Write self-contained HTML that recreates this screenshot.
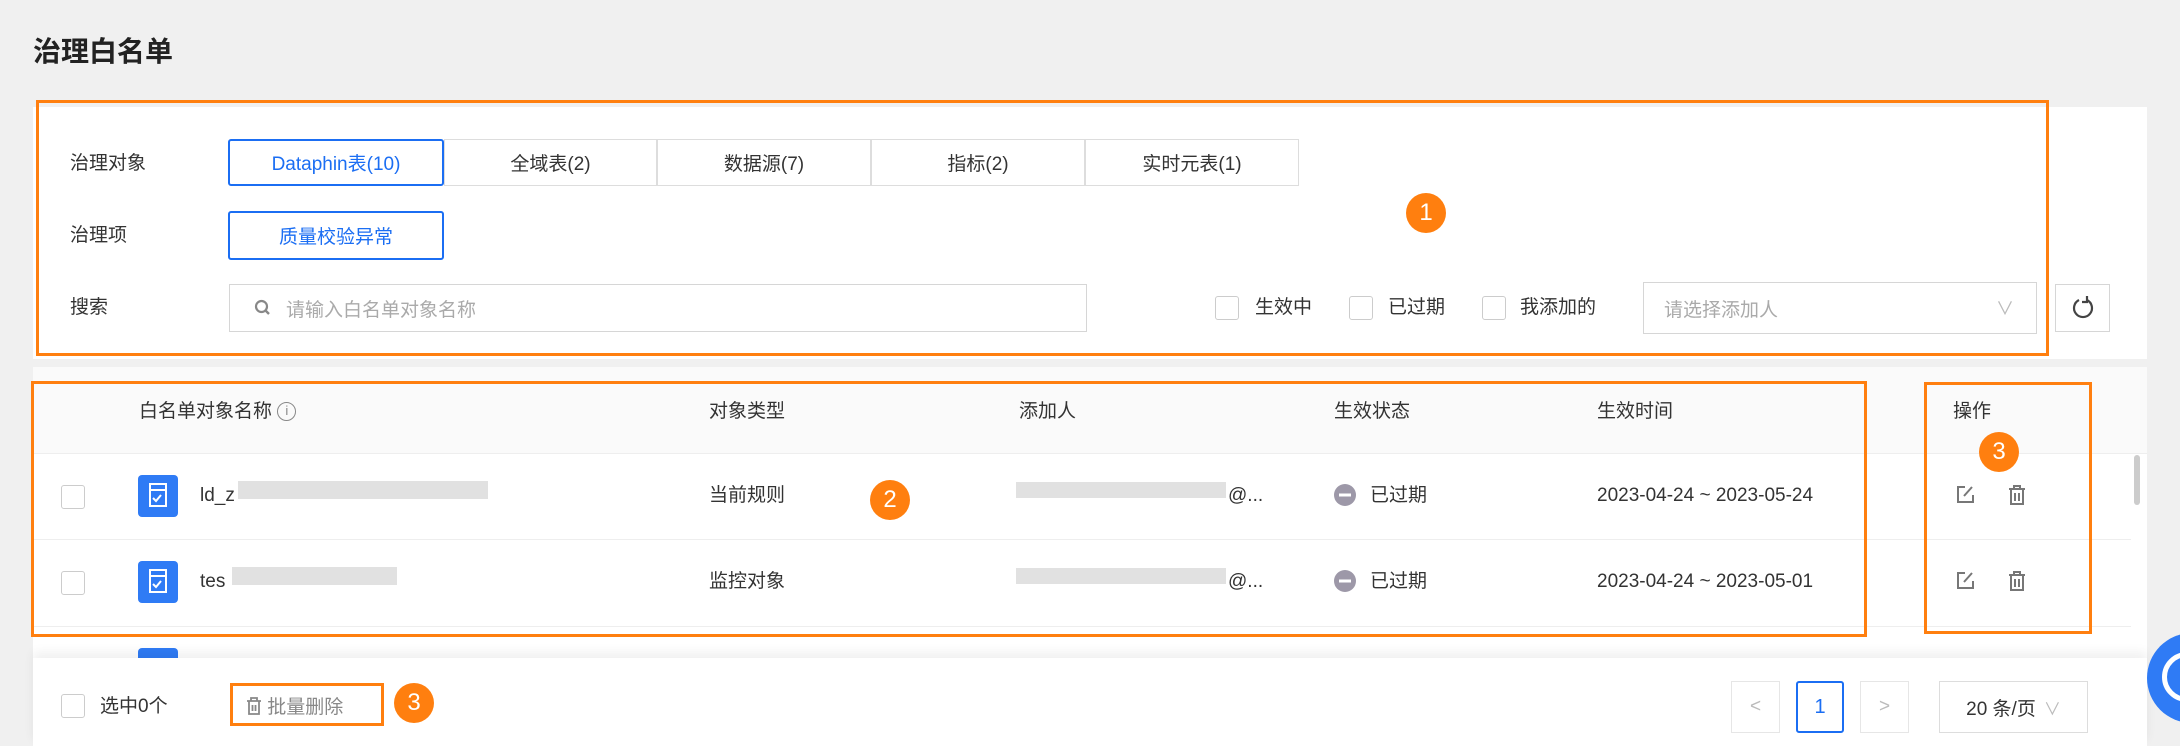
<!DOCTYPE html>
<html><head><meta charset="utf-8"><style>
*{box-sizing:border-box;margin:0;padding:0}
body{width:2180px;height:746px;background:#f0f0f0;position:relative;overflow:hidden;font-family:"Liberation Sans","Noto Sans CJK SC",sans-serif;font-size:19px;color:#333}
.a{position:absolute}
.t{position:absolute;white-space:nowrap;line-height:1}
.btn{position:absolute;border:1px solid #ddd;background:#fff;display:flex;align-items:center;justify-content:center;font-size:19px;color:#333}
.sel{border:2px solid #1b6ef3;color:#1b6ef3;border-radius:3px}
.cb{position:absolute;width:24px;height:24px;border:1px solid #ccc;border-radius:3px;background:#fff}
.ob{position:absolute;border:3px solid #ff7f0f}
.badge{position:absolute;width:40px;height:40px;border-radius:50%;background:#ff7f0f;color:#fff;font-size:24px;display:flex;align-items:center;justify-content:center}
.blur{position:absolute;background:#d4d4d4;opacity:.7}
</style></head><body>
<div class="t" style="left:33px;top:38px;font-size:28px;font-weight:bold;color:#222">治理白名单</div>
<div class="a" style="left:33px;top:107px;width:2114px;height:252px;background:#fff"></div>
<div class="t" style="left:70px;top:154px">治理对象</div>
<div class="btn sel" style="left:228px;top:139px;width:216px;height:47px">Dataphin表(10)</div>
<div class="btn" style="left:444px;top:139px;width:213px;height:47px">全域表(2)</div>
<div class="btn" style="left:657px;top:139px;width:214px;height:47px">数据源(7)</div>
<div class="btn" style="left:871px;top:139px;width:214px;height:47px">指标(2)</div>
<div class="btn" style="left:1085px;top:139px;width:214px;height:47px">实时元表(1)</div>
<div class="t" style="left:70px;top:226px">治理项</div>
<div class="btn sel" style="left:228px;top:211px;width:216px;height:49px">质量校验异常</div>
<div class="t" style="left:70px;top:298px">搜索</div>
<div class="btn" style="left:229px;top:284px;width:858px;height:48px;justify-content:flex-start;padding-left:24px;color:#aaa;border-color:#d6d6d6">
<svg width="18" height="18" viewBox="0 0 18 18" style="margin-right:14px"><circle cx="7.5" cy="7.5" r="5.5" fill="none" stroke="#888" stroke-width="2.2"/><path d="M11.5 11.5L15 15" stroke="#888" stroke-width="2.4"/></svg>请输入白名单对象名称</div>
<div class="cb" style="left:1215px;top:296px"></div><div class="t" style="left:1255px;top:298px">生效中</div>
<div class="cb" style="left:1349px;top:296px"></div><div class="t" style="left:1388px;top:298px">已过期</div>
<div class="cb" style="left:1482px;top:296px"></div><div class="t" style="left:1520px;top:298px">我添加的</div>
<div class="btn" style="left:1643px;top:282px;width:394px;height:52px;justify-content:flex-start;padding-left:20px;color:#aaa;border-color:#d6d6d6">请选择添加人<span style="position:absolute;right:22px;color:#bbb;font-size:18px">∨</span></div>
<div class="btn" style="left:2055px;top:284px;width:55px;height:48px;border-color:#d6d6d6"><svg width="24" height="26" viewBox="0 0 24 26"><path d="M8 5A9 9 0 1 0 16 5" fill="none" stroke="#444" stroke-width="2.2"/><path d="M16 1v6h-5" fill="none" stroke="#444" stroke-width="2.2"/></svg></div>
<div class="ob" style="left:36px;top:100px;width:2013px;height:256px"></div>
<div class="badge" style="left:1406px;top:193px">1</div>

<div class="a" style="left:33px;top:367px;width:2114px;height:291px;background:#fff"></div>
<div class="a" style="left:33px;top:367px;width:2114px;height:87px;background:#fafafa;border-bottom:1px solid #eee"></div>
<div class="t" style="left:139px;top:402px">白名单对象名称 <span style="display:inline-block;width:19px;height:19px;border:1.5px solid #888;border-radius:50%;font-size:13px;text-align:center;line-height:16px;color:#888;vertical-align:top">i</span></div>
<div class="t" style="left:709px;top:402px">对象类型</div>
<div class="t" style="left:1019px;top:402px">添加人</div>
<div class="t" style="left:1334px;top:402px">生效状态</div>
<div class="t" style="left:1597px;top:402px">生效时间</div>
<div class="t" style="left:1953px;top:402px">操作</div>
<div class="a" style="left:33px;top:539px;width:2098px;height:1px;background:#eee"></div>
<div class="a" style="left:33px;top:626px;width:2098px;height:1px;background:#eee"></div>

<div class="cb" style="left:61px;top:485px"></div>
<div class="a" style="left:138px;top:475px;width:40px;height:42px;background:#2f7bf5;border-radius:4px"><svg width="40" height="42" viewBox="0 0 40 42"><path d="M12 9h16v22h-16z" fill="none" stroke="#fff" stroke-width="2"/><path d="M12 15h16" stroke="#fff" stroke-width="2"/><path d="M15 23l3 3 5-6" fill="none" stroke="#fff" stroke-width="2"/></svg></div>
<div class="t" style="left:200px;top:486px">ld_z</div>
<div class="blur" style="left:238px;top:481px;width:250px;height:18px"></div>
<div class="t" style="left:709px;top:486px">当前规则</div>
<div class="blur" style="left:1016px;top:482px;width:210px;height:16px"></div><div class="t" style="left:1228px;top:486px">@...</div>
<svg class="a" style="left:1334px;top:484px" width="22" height="22"><circle cx="11" cy="11" r="11" fill="#9d98a8"/><rect x="5" y="9.5" width="12" height="3" fill="#fff"/></svg>
<div class="t" style="left:1370px;top:486px">已过期</div>
<div class="t" style="left:1597px;top:486px">2023-04-24 ~ 2023-05-24</div>

<div class="cb" style="left:61px;top:571px"></div>
<div class="a" style="left:138px;top:561px;width:40px;height:42px;background:#2f7bf5;border-radius:4px"><svg width="40" height="42" viewBox="0 0 40 42"><path d="M12 9h16v22h-16z" fill="none" stroke="#fff" stroke-width="2"/><path d="M12 15h16" stroke="#fff" stroke-width="2"/><path d="M15 23l3 3 5-6" fill="none" stroke="#fff" stroke-width="2"/></svg></div>
<div class="t" style="left:200px;top:572px">tes</div>
<div class="blur" style="left:232px;top:567px;width:165px;height:18px"></div>
<div class="t" style="left:709px;top:572px">监控对象</div>
<div class="blur" style="left:1016px;top:568px;width:210px;height:16px"></div><div class="t" style="left:1228px;top:572px">@...</div>
<svg class="a" style="left:1334px;top:570px" width="22" height="22"><circle cx="11" cy="11" r="11" fill="#9d98a8"/><rect x="5" y="9.5" width="12" height="3" fill="#fff"/></svg>
<div class="t" style="left:1370px;top:572px">已过期</div>
<div class="t" style="left:1597px;top:572px">2023-04-24 ~ 2023-05-01</div>

<svg class="a" style="left:1955px;top:485px" width="20" height="20"><path d="M10 2H3v15h15v-7" fill="none" stroke="#777" stroke-width="2"/><path d="M9 11l8-9" stroke="#777" stroke-width="2"/></svg>
<svg class="a" style="left:2007px;top:484px" width="20" height="22"><path d="M2 5h16M7 5V2h6v3M4 5v15h12V5M8 9v8M12 9v8" fill="none" stroke="#777" stroke-width="2"/></svg>
<svg class="a" style="left:1955px;top:571px" width="20" height="20"><path d="M10 2H3v15h15v-7" fill="none" stroke="#777" stroke-width="2"/><path d="M9 11l8-9" stroke="#777" stroke-width="2"/></svg>
<svg class="a" style="left:2007px;top:570px" width="20" height="22"><path d="M2 5h16M7 5V2h6v3M4 5v15h12V5M8 9v8M12 9v8" fill="none" stroke="#777" stroke-width="2"/></svg>
<div class="a" style="left:2134px;top:455px;width:6px;height:50px;background:#ccc;border-radius:3px"></div>
<div class="a" style="left:138px;top:648px;width:40px;height:12px;background:#2f7bf5;border-radius:4px 4px 0 0"></div>

<div class="ob" style="left:31px;top:381px;width:1836px;height:256px"></div>
<div class="ob" style="left:1924px;top:382px;width:168px;height:252px"></div>
<div class="badge" style="left:870px;top:480px">2</div>
<div class="badge" style="left:1979px;top:432px">3</div>

<div class="a" style="left:33px;top:658px;width:2114px;height:88px;background:#fff;box-shadow:0 -6px 10px rgba(0,0,0,.06)"></div>
<div class="cb" style="left:61px;top:694px"></div>
<div class="t" style="left:100px;top:697px">选中0个</div>
<div class="t" style="left:246px;top:697px;color:#888">
<svg width="16" height="18" viewBox="0 0 16 18" style="vertical-align:-2px"><path d="M1 4h14M5 4V1h6v3M3 4v13h10V4M6.5 8v6M9.5 8v6" fill="none" stroke="#888" stroke-width="1.8"/></svg> 批量删除</div>
<div class="ob" style="left:230px;top:683px;width:154px;height:43px"></div>
<div class="badge" style="left:394px;top:683px">3</div>
<div class="btn" style="left:1731px;top:681px;width:49px;height:52px;color:#bbb;border-color:#e6e6e6">&lt;</div>
<div class="btn sel" style="left:1796px;top:681px;width:48px;height:52px;font-size:20px">1</div>
<div class="btn" style="left:1860px;top:681px;width:49px;height:52px;color:#bbb;border-color:#e6e6e6">&gt;</div>
<div class="btn" style="left:1939px;top:681px;width:149px;height:52px;border-color:#ddd">20 条/页 <span style="color:#bbb;margin-left:8px;font-size:17px">∨</span></div>
<div class="a" style="left:2147px;top:633px;width:90px;height:90px;border-radius:50%;background:#2f7bf5"></div>
<div class="a" style="left:2162px;top:652px;width:50px;height:50px;border-radius:50%;border:5px solid #fff"></div>
</body></html>
